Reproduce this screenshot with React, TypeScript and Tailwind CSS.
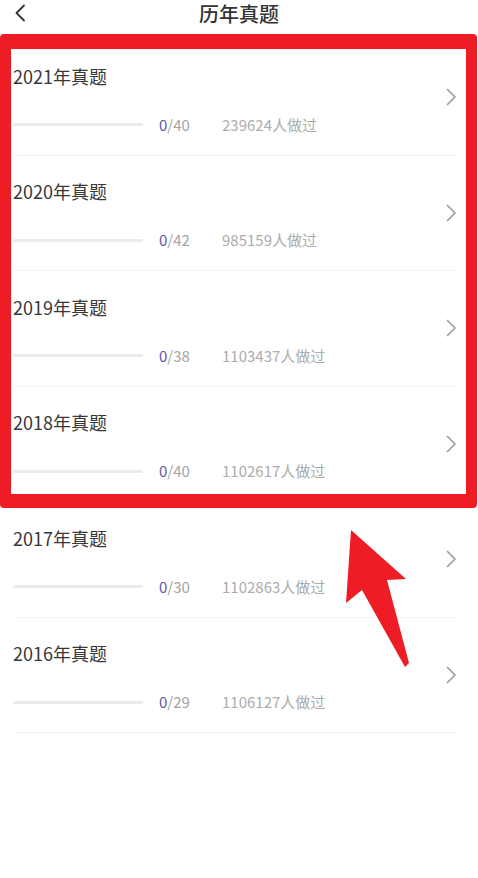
import React from "react";

interface Paper {
  year: number;
  done: number;
  total: number;
  people: number;
}

const papers: Paper[] = [
  { year: 2021, done: 0, total: 40, people: 239624 },
  { year: 2020, done: 0, total: 42, people: 985159 },
  { year: 2019, done: 0, total: 38, people: 1103437 },
  { year: 2018, done: 0, total: 40, people: 1102617 },
  { year: 2017, done: 0, total: 30, people: 1102863 },
  { year: 2016, done: 0, total: 29, people: 1106127 },
];

const font = { fontFamily: '"Noto Sans CJK SC", "Noto Sans", sans-serif' };

const Arrow = () => (
  <svg width="11" height="18" viewBox="0 0 11 18" fill="none" className="shrink-0">
    <polyline points="1.5,1.5 9,9 1.5,16.5" stroke="#9e9e9e" strokeWidth="1.7" strokeLinecap="round" strokeLinejoin="round" />
  </svg>
);

const PaperRow = ({ paper }: { paper: Paper }) => (
  <div className="flex h-[115.5px] items-center border-b border-[#f3f3f3]">
    <div className="flex-1 pt-[24px] pb-[20px]">
      <p className="text-[18px] leading-[24px] text-[#383838]">{paper.year}年真题</p>
      <div className="mt-[27px] flex h-[20px] items-center">
        <div className="h-[3px] w-[130px] rounded-full bg-[#ebebeb]" />
        <span className="ml-[16px] w-[63px] text-[15px] leading-[20px] text-[#a3a3a3]">
          <span className="text-[#5d57a6]">{paper.done}</span>/{paper.total}
        </span>
        <span className="text-[15px] leading-[20px] text-[#acacac]">{paper.people}人做过</span>
      </div>
    </div>
    <Arrow />
  </div>
);

export default function App() {
  return (
    <div className="relative min-h-[878px] w-[478px] overflow-hidden bg-white" style={font}>
      {/* header */}
      <div className="relative flex h-10 justify-center pt-[1px]">
        <svg className="absolute left-[14px] top-[4px]" width="12" height="18" viewBox="0 0 12 18" fill="none">
          <polyline points="10,1.5 2.5,9 10,16.5" stroke="#333" strokeWidth="1.8" strokeLinecap="round" strokeLinejoin="round" />
        </svg>
        <h1 className="text-[20px] font-medium leading-[26px] text-[#333]">历年真题</h1>
      </div>

      {/* list */}
      <div className="ml-[13px] mr-[21px]">
        {papers.map((p) => (
          <PaperRow key={p.year} paper={p} />
        ))}
      </div>

      {/* highlight frame */}
      <div className="pointer-events-none absolute left-0 top-[34px] h-[474px] w-[477px] rounded-[4px] border-x-[11px] border-t-[15px] border-b-[14px] border-[#ee1c25]" />

      {/* pointer arrow */}
      <svg className="pointer-events-none absolute left-0 top-0" width="478" height="878" viewBox="0 0 478 878">
        <polygon points="351,530 406,579 387,580 409,663 405,667 362,590 346,603" fill="#ee1c25" />
      </svg>
    </div>
  );
}
